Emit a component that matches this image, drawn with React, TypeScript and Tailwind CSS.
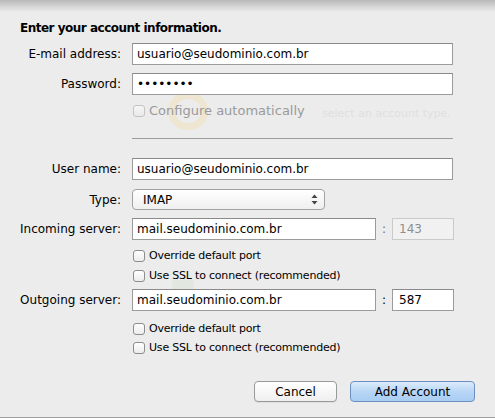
import React from "react";

const font = { fontFamily: '"DejaVu Sans", Verdana, sans-serif' };

function Field({ value, className = "", disabled = false }: { value: string; className?: string; disabled?: boolean }) {
  return (
    <div
      className={
        "h-[22px] flex items-center pl-[4px] border " +
        (disabled
          ? "bg-[#f1f1f1] border-[#cacaca] text-[#8e8e8e] "
          : "bg-white border-[#9b9b9b] border-t-[#8a8a8a] text-black ") +
        className
      }
    >
      <span className="leading-none">{value}</span>
    </div>
  );
}

function Check({ label, disabled = false }: { label: string; disabled?: boolean }) {
  return (
    <div className="flex items-center h-[13px]">
      <div
        className={
          "w-[12px] h-[12px] rounded-[3px] border ml-[1px] shrink-0 " +
          (disabled
            ? "border-[#c4c4c4] bg-linear-to-b from-[#f6f6f6] to-[#e9e9e9]"
            : "border-[#8d8d8d] bg-linear-to-b from-white to-[#ececec]")
        }
      />
      <span
        className={
          "ml-[4px] leading-none whitespace-nowrap " +
          (disabled ? "text-[#9a9a9a] text-[13px]" : "text-black text-[11px] tracking-[-0.2px]")
        }
      >
        {label}
      </span>
    </div>
  );
}

function Row({ label, children, className = "" }: { label: string; children: React.ReactNode; className?: string }) {
  return (
    <div className={"flex items-center " + className}>
      <div className="w-[121px] text-right whitespace-nowrap">{label}</div>
      <div className="ml-[11px] flex items-center">{children}</div>
    </div>
  );
}

export default function App() {
  return (
    <div className="relative w-[495px] h-[418px] bg-[#ececec] overflow-hidden text-[12px] text-black" style={font}>
      {/* faint sheet behind */}
      <div className="absolute inset-0 pointer-events-none">
        <div className="absolute left-[168px] top-[92px] w-[40px] h-[38px] rounded-full border-[7px] border-[#efe6d2]" />
        <div className="absolute left-[322px] top-[106px] whitespace-nowrap text-[11px] text-[#e0e0e0]">select an account type.</div>
        <div className="absolute left-[172px] top-[280px] w-[22px] h-[12px] rounded-[3px] bg-[#e2e8df]" />
      </div>

      <div className="relative flex flex-col pt-[21px]">
        <div className="h-[15px] leading-[15px] pl-[20px] font-bold whitespace-nowrap tracking-[-0.5px]">
          Enter your account information.
        </div>

        <Row label="E-mail address:" className="mt-[7px]">
          <Field value="usuario@seudominio.com.br" className="w-[321px]" />
        </Row>
        <Row label="Password:" className="mt-[8px]">
          <Field value="••••••••" className="w-[321px] text-[12px]" />
        </Row>
        <div className="mt-[9px] ml-[132px]">
          <Check label="Configure automatically" disabled />
        </div>

        <div className="mt-[21px] ml-[132px] w-[321px] h-px bg-[#9c9c9c]" />

        <Row label="User name:" className="mt-[19px]">
          <Field value="usuario@seudominio.com.br" className="w-[321px]" />
        </Row>
        <Row label="Type:" className="mt-[9px]">
          <div className="relative w-[193px] h-[21px] rounded-[4px] border border-[#a2a2a2] bg-linear-to-b from-white to-[#efefef] flex items-center pl-[10px]">
            <span className="leading-none">IMAP</span>
            <svg className="absolute right-[6px] top-[4px]" width="7" height="11" viewBox="0 0 7 11">
              <path d="M3.5 0.5 L6.5 4 L0.5 4 Z" fill="#444" />
              <path d="M3.5 10.5 L6.5 7 L0.5 7 Z" fill="#444" />
            </svg>
          </div>
        </Row>
        <Row label="Incoming server:" className="mt-[8px]">
          <Field value="mail.seudominio.com.br" className="w-[244px]" />
          <span className="w-[16px] text-center text-[#6e6e6e]">:</span>
          <Field value="143" className="w-[62px] pl-[6px]" disabled />
        </Row>
        <div className="mt-[9px] ml-[132px]">
          <Check label="Override default port" />
        </div>
        <div className="mt-[7px] ml-[132px]">
          <Check label="Use SSL to connect (recommended)" />
        </div>

        <Row label="Outgoing server:" className="mt-[7px]">
          <Field value="mail.seudominio.com.br" className="w-[244px]" />
          <span className="w-[16px] text-center">:</span>
          <Field value="587" className="w-[62px] pl-[6px]" />
        </Row>
        <div className="mt-[11px] ml-[132px]">
          <Check label="Override default port" />
        </div>
        <div className="mt-[6px] ml-[132px]">
          <Check label="Use SSL to connect (recommended)" />
        </div>

        <div className="mt-[27px] flex pl-[254px]">
          <div className="w-[83px] h-[21px] rounded-[4px] border border-[#999] bg-linear-to-b from-white to-[#efefef] flex items-center justify-center shadow-[0_1px_0_rgba(0,0,0,0.06)]">
            Cancel
          </div>
          <div className="ml-[13px] w-[125px] h-[21px] rounded-[4px] border border-[#6b8fbf] bg-linear-to-b from-[#dcebfb] via-[#b9d6f5] to-[#a8cdf3] flex items-center justify-center">
            Add Account
          </div>
        </div>
      </div>

      <div className="absolute top-0 left-0 right-0 h-[12px] bg-linear-to-b from-[#b9b9b9] to-[#ececec00]" />
      <div className="absolute bottom-0 left-0 right-0 h-px bg-[#9d9d9d]" />
    </div>
  );
}
